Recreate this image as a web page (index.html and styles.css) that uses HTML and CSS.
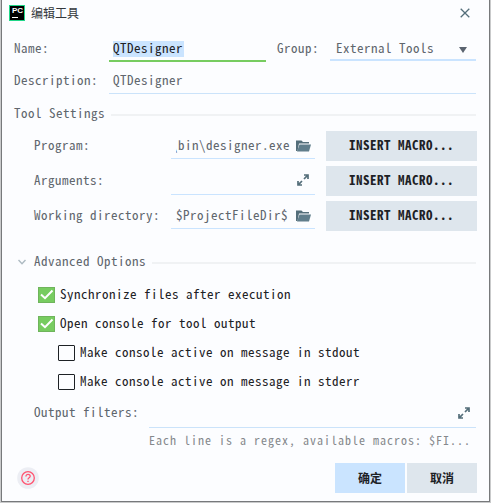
FILE: index.html
```html
<!DOCTYPE html>
<html lang="zh-CN">
<head>
<meta charset="utf-8">
<title>编辑工具</title>
<link rel="stylesheet" href="styles.css">
</head>
<body>
<svg class="defs" aria-hidden="true">
  <symbol id="folder" viewBox="0 0 15 12"><path fill="#546e7a" d="M0 .5h5.500L7 2h6v1.500H3L1.500 11H0z"/><path fill="#607d8b" d="M3.500 4.500H15L13 11.500H1z"/></symbol>
  <symbol id="expand" viewBox="0 0 12 12"><path fill="none" stroke="#546e7a" stroke-width="1.700" d="M7 1h4v4M10.800 1.200L7 5M1 7v4h4M1.200 10.800L5 7"/></symbol>
  <symbol id="tick" viewBox="0 0 17 16"><rect width="17" height="16" fill="#6fb45c"/><rect x="1" y="1" width="15" height="14" fill="#77cc60"/><path d="M3 7.500l4 3.700 7.500-7.700" fill="none" stroke="#fff" stroke-width="2"/></symbol>
</svg>
<main class="dialog">
  <header class="titlebar">
    <span class="logo"><b>PC</b><i></i></span>
    <h1>编辑工具</h1>
    <svg class="close" viewBox="0 0 10 10"><path d="M.7.7l8.600 8.600M9.300.7L.7 9.300" fill="none" stroke="#546e7a" stroke-width="1.300"/></svg>
  </header>
  <div class="row name-row">
    <label class="label">Name:</label>
    <div class="field focused"><span class="selected">QTDesigner</span></div>
    <label class="group-label">Group:</label>
    <div class="select"><span>External Tools</span><svg viewBox="0 0 8 6"><path d="M0 0h8L4 6z" fill="#5b6470"/></svg></div>
  </div>
  <div class="row desc-row">
    <label class="label">Description:</label>
    <div class="field wide">QTDesigner</div>
  </div>
  <div class="section tools"><span>Tool Settings</span><hr></div>
  <div class="settings">
    <div class="setting">
      <label>Program:</label>
      <div class="path"><span class="clip"><span>\bin\designer.exe</span></span><svg class="folder"><use href="#folder"/></svg></div>
      <button class="macro">INSERT MACRO...</button>
    </div>
    <div class="setting args">
      <label>Arguments:</label>
      <div class="path"><span class="clip"></span><svg class="expand"><use href="#expand"/></svg></div>
      <button class="macro">INSERT MACRO...</button>
    </div>
    <div class="setting">
      <label>Working directory:</label>
      <div class="path"><span class="value">$ProjectFileDir$</span><svg class="folder"><use href="#folder"/></svg></div>
      <button class="macro">INSERT MACRO...</button>
    </div>
  </div>
  <div class="section advanced">
    <svg class="chevron" viewBox="0 0 8 6"><path d="M.5 1L4 4.700 7.500 1" fill="none" stroke="#adbac2" stroke-width="1.400"/></svg>
    <span>Advanced Options</span><hr>
  </div>
  <div class="checks">
    <label class="check"><svg class="box"><use href="#tick"/></svg><span>Synchronize files after execution</span></label>
    <label class="check"><svg class="box"><use href="#tick"/></svg><span>Open console for tool output</span></label>
    <label class="check nested"><span class="box empty"></span><span>Make console active on message in stdout</span></label>
    <label class="check nested"><span class="box empty"></span><span>Make console active on message in stderr</span></label>
  </div>
  <div class="output">
    <label>Output filters:</label>
    <div class="filter"><svg class="expand"><use href="#expand"/></svg></div>
  </div>
  <p class="hint">Each line is a regex, available macros: $FI...</p>
  <footer class="footer">
    <svg class="help" viewBox="0 0 22 22"><circle cx="11" cy="11" r="10.800" fill="#eceef4"/><circle cx="11" cy="11" r="6.300" fill="none" stroke="#ff5370" stroke-width="1.300"/><path d="M8.900 9.500c0-2.900 4.300-2.700 4.300-.2 0 1.500-2.200 1.500-2.200 3.200M11 13.700v1.300" fill="none" stroke="#ff5370" stroke-width="1.300"/></svg>
    <button class="ok">确定</button>
    <button class="cancel">取消</button>
  </footer>
</main>
</body>
</html>
```

FILE: styles.css
```css
* { box-sizing: border-box; }

body {
  margin: 0;
  width: 491px;
  height: 503px;
  overflow: hidden;
  background: #c9cacb;
  color: #60666d;
  font: 13px/18px "Noto Sans Mono CJK SC", "Noto Sans CJK SC", monospace;
  letter-spacing: .5px;
  white-space: nowrap;
}

.defs { display: none; }

.dialog {
  width: 489px;
  height: 502px;
  margin-left: 1px;
  border: solid #77797b;
  border-width: 0 1px 1px;
  background: #fcfdff;
}

.titlebar {
  display: flex;
  align-items: center;
  height: 26px;
  padding: 0 19px 0 7px;
}

.logo {
  width: 16px;
  height: 16px;
  padding: 1px 0 0 2px;
  border: 1px solid #21d789;
  background: #000;
  color: #fff;
}

.logo b {
  display: block;
  font: bold 8px/8px "Liberation Sans", sans-serif;
  letter-spacing: 0;
}

.logo i {
  display: block;
  width: 6px;
  height: 1px;
  margin-top: 2px;
  background: #fff;
}

h1 {
  flex: 1;
  margin: 0 0 0 6px;
  color: #33373b;
  font: 12px/20px "Noto Sans CJK SC", sans-serif;
  letter-spacing: 0;
}

.close { width: 10px; height: 10px; }

.row {
  display: flex;
  padding-left: 12px;
}

.name-row { height: 36px; padding-top: 13px; }
.desc-row { height: 32px; padding-top: 9px; }

.label { width: 95px; }

.field {
  width: 157px;
  height: 23px;
  padding-left: 4px;
}

.focused { border-bottom: 2px solid #77cc60; }

.wide {
  width: 367px;
  border-bottom: 1px solid #cbe3fa;
}

.selected {
  display: block;
  width: 71px;
  height: 16px;
  margin-top: 2px;
  background: #cae4ff;
  color: #1d2125;
  line-height: 14px;
}

.group-label { width: 64px; padding-left: 11px; }

.select {
  display: flex;
  justify-content: space-between;
  width: 146px;
  height: 22px;
  padding: 0 9px 0 6px;
  border-bottom: 2px solid #cae4ff;
}

.select svg { width: 8px; height: 6px; margin-top: 8px; }

.section {
  display: flex;
  align-items: center;
  height: 20px;
  padding-right: 13px;
}

.section span { height: 20px; }

.section hr {
  flex: 1;
  height: 2px;
  margin: 1px 0 0 6px;
  border: 0;
  background: #f0f2f4;
}

.tools { margin-top: 10px; padding-left: 12px; }

.settings {
  display: grid;
  gap: 5px;
  margin-top: 7px;
  padding-left: 32px;
}

.setting {
  display: flex;
  height: 30px;
}

.setting label { width: 137px; padding-top: 5px; }

.path {
  display: flex;
  justify-content: space-between;
  width: 144px;
  height: 28px;
  padding: 5px 4px 0 5px;
  border-bottom: 1px solid #cae4ff;
}

.args .path { height: 29px; padding-right: 6px; }

.clip {
  display: flex;
  justify-content: flex-end;
  width: 114px;
  overflow: hidden;
}

.folder { width: 15px; height: 12px; margin-top: 4px; }
.expand { width: 12px; height: 12px; margin-top: 3px; }

button {
  padding: 0;
  border: 0;
  background: #dee6ed;
  color: #1d2125;
  font: bold 13px/28px "Noto Sans Mono CJK SC", "Noto Sans CJK SC", monospace;
  letter-spacing: .5px;
}

.macro { width: 151px; margin-left: 11px; padding-bottom: 2px; }

.advanced { margin-top: 21px; padding-left: 16px; }

.chevron { width: 8px; height: 6px; margin-right: 8px; }

.checks { margin-top: 8px; }

.check {
  display: flex;
  align-items: center;
  height: 29px;
  padding-left: 36px;
  color: #1d2125;
}

.check span:last-child { padding-bottom: 2px; }

.nested { padding-left: 56px; }

.box { width: 17px; height: 16px; margin-right: 5px; }

.empty {
  border: 1px solid #1d2125;
  border-radius: 1px;
}

.output {
  display: flex;
  height: 32px;
  padding: 7px 0 0 32px;
}

.output label { width: 115px; }

.filter {
  display: flex;
  justify-content: flex-end;
  width: 327px;
  height: 25px;
  padding-right: 6px;
  border-bottom: 1px solid #cbe3fa;
}

.filter .expand { margin-top: 4px; }

.hint {
  height: 20px;
  margin: 2px 0 0 147px;
  color: #85888c;
  font-size: 12px;
  line-height: 20px;
  letter-spacing: 1px;
}

.footer {
  display: flex;
  gap: 2px;
  margin-top: 13px;
  padding-left: 15px;
}

.help { width: 22px; height: 22px; margin: 4px 294px 0 0; }

.footer button {
  width: 70px;
  height: 30px;
  font: bold 12px/28px "Noto Sans CJK SC", sans-serif;
  letter-spacing: 0;
}
.footer .ok { background: #cae4ff; }
```
